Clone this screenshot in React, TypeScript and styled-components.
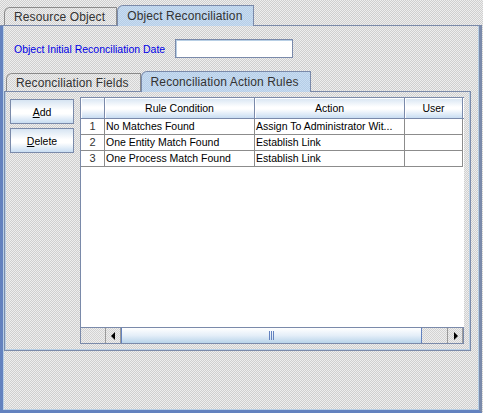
import styled, { createGlobalStyle, css } from "styled-components";

const dither = (base: string, dot: string) => css`
  background-color: ${base};
  background-image: conic-gradient(${dot} 25%, transparent 0 50%, ${dot} 0 75%, transparent 0);
  background-size: 2px 2px;
`;

const GlobalStyle = createGlobalStyle`
  body {
    margin: 0;
    font-family: "Liberation Sans", Arial, sans-serif;
  }
`;

const rows = [
  { n: 1, rule: "No Matches Found", action: "Assign To Administrator Wit...", user: "" },
  { n: 2, rule: "One Entity Match Found", action: "Establish Link", user: "" },
  { n: 3, rule: "One Process Match Found", action: "Establish Link", user: "" },
];

const App = () => {
  return (
    <>
      <GlobalStyle />
      <Frame>
        <TabStrip>
          <Tab>Resource Object</Tab>
          <Tab $active>Object Reconciliation</Tab>
        </TabStrip>
        <OuterPanel>
          <DateRow>
            <DateLabel>Object Initial Reconciliation Date</DateLabel>
            <DateInput />
          </DateRow>
          <InnerSection>
            <TabStrip $inner>
              <Tab>Reconciliation Fields</Tab>
              <Tab $active>Reconciliation Action Rules</Tab>
            </TabStrip>
            <InnerPanel>
              <ButtonColumn>
                <Button>
                  <u>A</u>dd
                </Button>
                <Button>
                  <u>D</u>elete
                </Button>
              </ButtonColumn>
              <Table>
                <HeaderRow>
                  <HeaderCell />
                  <HeaderCell>Rule Condition</HeaderCell>
                  <HeaderCell>Action</HeaderCell>
                  <HeaderCell>User</HeaderCell>
                </HeaderRow>
                <Body>
                  {rows.map((r) => (
                    <Row key={r.n}>
                      <NumCell>{r.n}</NumCell>
                      <Cell>{r.rule}</Cell>
                      <Cell>{r.action}</Cell>
                      <Cell>{r.user}</Cell>
                    </Row>
                  ))}
                </Body>
                <ScrollBar>
                  <Corner />
                  <ArrowButton>
                    <svg width="5" height="8" viewBox="0 0 5 8">
                      <path d="M4 0 L0 4 L4 8 Z" fill="#000" />
                    </svg>
                  </ArrowButton>
                  <Thumb>
                    <Grip />
                  </Thumb>
                  <Track />
                  <ArrowButton>
                    <svg width="5" height="8" viewBox="0 0 5 8">
                      <path d="M1 0 L5 4 L1 8 Z" fill="#000" />
                    </svg>
                  </ArrowButton>
                </ScrollBar>
              </Table>
            </InnerPanel>
          </InnerSection>
        </OuterPanel>
      </Frame>
    </>
  );
};

const Frame = styled.div`
  width: 483px;
  height: 413px;
  box-sizing: border-box;
  padding-top: 5px;
  display: flex;
  flex-direction: column;
  ${dither("#eeeeee", "#cfcfcf")}
`;

const TabStrip = styled.div<{ $inner?: boolean }>`
  display: flex;
  align-items: flex-end;
  height: 20px;
  padding-left: ${(p) => (p.$inner ? "2px" : "4px")};
  margin: ${(p) => (p.$inner ? "0" : "0 1px 0 0")};
  border-bottom: 1px solid #7a8aaa;
`;

const Tab = styled.div<{ $active?: boolean }>`
  box-sizing: border-box;
  height: ${(p) => (p.$active ? "21px" : "18px")};
  margin-bottom: ${(p) => (p.$active ? "-1px" : "0")};
  padding: 0 11px ${(p) => (p.$active ? "1px" : "0")} 9px;
  display: flex;
  align-items: center;
  font-size: 12px;
  letter-spacing: 0.12px;
  color: #333;
  border: 1px solid ${(p) => (p.$active ? "#7a8aaa" : "#8a8a8a")};
  border-bottom: none;
  border-top-left-radius: 6px;
  white-space: nowrap;
  ${(p) => (p.$active ? dither("#c8ddf2", "#b6cde6") : dither("#eeeeee", "#d2d2d2"))}
`;

const OuterPanel = styled.div`
  flex: 1;
  margin: 0 1px 0 0;
  border-left: 3px solid #6382bf;
  border-right: 3px solid #7a8aaa;
  border-bottom: 3px solid #6382bf;
  box-shadow: inset 1px 0 0 #b8cfe5, inset -1px 0 0 #b8cfe5, inset 0 -1px 0 #b8cfe5;
  display: flex;
  flex-direction: column;
`;

const DateRow = styled.div`
  display: grid;
  grid-template-columns: 161px 118px;
  align-items: center;
  margin-top: 13px;
  padding-left: 11px;
`;

const DateLabel = styled.span`
  font-size: 10.5px;
  color: #0000e6;
  white-space: nowrap;
`;

const DateInput = styled.div`
  box-sizing: border-box;
  height: 19px;
  background: #fff;
  border: 1px solid #7a8aaa;
  box-shadow: inset 1px 1px 0 #b8cfe5;
`;

const InnerSection = styled.div`
  margin: 13px 8px 0 1px;
  display: flex;
  flex-direction: column;
`;

const InnerPanel = styled.div`
  height: 259px;
  box-sizing: border-box;
  border: 1px solid #7a8aaa;
  border-top: none;
  box-shadow: inset -1px 0 0 #b8cfe5, inset 0 -1px 0 #b8cfe5, inset 1px 0 0 #b8cfe5;
  padding: 5px 6px 6px 5px;
  display: flex;
  gap: 6px;
`;

const ButtonColumn = styled.div`
  display: flex;
  flex-direction: column;
  gap: 4px;
  padding-top: 2px;
`;

const Button = styled.div`
  width: 64px;
  height: 25px;
  box-sizing: border-box;
  border: 1px solid #7a8aaa;
  background: linear-gradient(#d6e4f2, #ffffff 45%, #ffffff 60%, #c8ddf2);
  display: flex;
  align-items: center;
  justify-content: center;
  font-size: 10.5px;
  color: #000;
`;

const Table = styled.div`
  width: 384px;
  height: 247px;
  box-sizing: border-box;
  border: 1px solid #7a8aaa;
  border-right: none;
  display: flex;
  flex-direction: column;
  background: #fff;
`;

const columns = "24px 150px 150px 58px";

const HeaderRow = styled.div`
  display: grid;
  grid-template-columns: ${columns};
  height: 21px;
  box-sizing: border-box;
  border-bottom: 1px solid #7a8aaa;
`;

const HeaderCell = styled.div`
  display: flex;
  align-items: center;
  justify-content: center;
  font-size: 10.5px;
  color: #000;
  border-right: 1px solid #7a8aaa;
  box-shadow: inset 1px 1px 0 #ffffff;
  background: linear-gradient(#d6e4f2, #ffffff 45%, #ffffff 55%, #c8ddf2);
  white-space: nowrap;
  overflow: hidden;
`;

const Body = styled.div`
  flex: 1;
  background: #fff;
`;

const Row = styled.div`
  display: grid;
  grid-template-columns: ${columns};
  height: 16px;
`;

const Cell = styled.div`
  box-sizing: border-box;
  border-right: 1px solid #8c8c8c;
  border-bottom: 1px solid #8c8c8c;
  padding-left: 1px;
  font-size: 10.5px;
  line-height: 15px;
  color: #000;
  white-space: nowrap;
  overflow: hidden;
`;

const NumCell = styled(Cell)`
  text-align: center;
  padding-left: 0;
  color: #333;
  font-size: 11px;
`;

const ScrollBar = styled.div`
  height: 16px;
  box-sizing: border-box;
  border-top: 1px solid #7a8aaa;
  border-right: 1px solid #7a8aaa;
  display: flex;
  ${dither("#eeeeee", "#d2d2d2")}
`;

const Corner = styled.div`
  width: 24px;
  border-right: 1px solid #9a9a9a;
`;

const ArrowButton = styled.div`
  width: 15px;
  box-sizing: border-box;
  border-right: 1px solid #9a9a9a;
  display: flex;
  align-items: center;
  justify-content: center;
`;

const Thumb = styled.div`
  width: 301px;
  box-sizing: border-box;
  border-left: 1px solid #6382bf;
  border-right: 1px solid #6382bf;
  background: linear-gradient(#ffffff, #e4eef8 50%, #b8d4ea);
  display: flex;
  align-items: center;
  justify-content: center;
`;

const Grip = styled.div`
  width: 5px;
  height: 9px;
  background: repeating-linear-gradient(90deg, #6382bf 0 1px, transparent 1px 2px);
`;

const Track = styled.div`
  flex: 1;
  border-right: 1px solid #9a9a9a;
`;

export default App;
